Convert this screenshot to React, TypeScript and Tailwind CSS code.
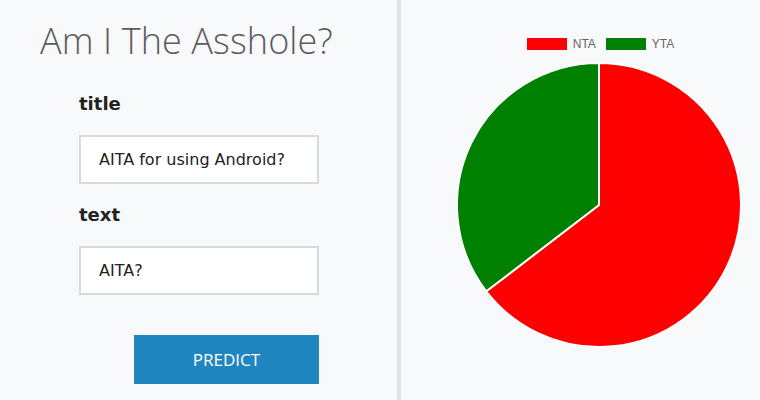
import React from 'react';

// share of NTA vs YTA
const slices = [
  { label: 'NTA', value: 0.646, color: '#ff0000' },
  { label: 'YTA', value: 0.354, color: '#008000' },
];

function PieChart() {
  const cx = 150;
  const cy = 150;
  const r = 142;
  let start = -Math.PI / 2;
  return (
    <svg width="300" height="300" viewBox="0 0 300 300">
      {slices.map((s) => {
        const end = start + s.value * Math.PI * 2;
        const x1 = cx + r * Math.cos(start);
        const y1 = cy + r * Math.sin(start);
        const x2 = cx + r * Math.cos(end);
        const y2 = cy + r * Math.sin(end);
        const large = end - start > Math.PI ? 1 : 0;
        const d = `M ${cx} ${cy} L ${x1} ${y1} A ${r} ${r} 0 ${large} 1 ${x2} ${y2} Z`;
        start = end;
        return <path key={s.label} d={d} fill={s.color} stroke="#ffffff" strokeWidth={2} strokeLinejoin="round" />;
      })}
    </svg>
  );
}

export default function App() {
  return (
    <div className="flex h-[400px] w-[760px] overflow-hidden bg-[#f8f9fb]">
      {/* Form side */}
      <div className="flex w-[397px] shrink-0 flex-col">
        <h1 className="ml-[40px] mt-[19px] text-[36px] font-light leading-[44px] tracking-[0.1px] text-[#5c5c5c] [font-family:'Open_Sans',sans-serif]">
          Am I The Asshole?
        </h1>
        <div className="ml-[79px] flex flex-col [font-family:'DejaVu_Sans',sans-serif]">
          <label className="mt-[29px] text-[18px] font-bold leading-[24px] text-[#222]">title</label>
          <div className="mt-[19px] flex h-[49px] w-[240px] items-center border-2 border-[#d5dbe1] bg-white pl-[18px] text-[16px] text-[#222]">
            AITA for using Android?
          </div>
          <label className="mt-[19px] text-[18px] font-bold leading-[24px] text-[#222]">text</label>
          <div className="mt-[19px] flex h-[49px] w-[240px] items-center border-2 border-[#d5dbe1] bg-white pl-[18px] text-[16px] text-[#222]">
            AITA?
          </div>
          <button className="ml-[55px] mt-[40px] h-[49px] w-[185px] bg-[#1f86bf] text-[17px] text-white [font-family:'Open_Sans',sans-serif]">
            PREDICT
          </button>
        </div>
      </div>

      <div className="w-[4px] shrink-0 bg-[#dfe2e6]" />

      {/* Chart side */}
      <div className="flex-1">
        <div className="ml-[48px] flex w-[300px] flex-col items-center">
          <div className="mt-[38px] ml-[3px] flex items-center gap-[10px] text-[12px] leading-[12px] text-[#666] [font-family:'Liberation_Sans',sans-serif]">
            {slices.map((s) => (
              <div key={s.label} className="flex items-center gap-[6px]">
                <span className="h-[12px] w-[40px]" style={{ backgroundColor: s.color }} />
                <span>{s.label}</span>
              </div>
            ))}
          </div>
          <div className="mt-[5px]">
            <PieChart />
          </div>
        </div>
      </div>
    </div>
  );
}
